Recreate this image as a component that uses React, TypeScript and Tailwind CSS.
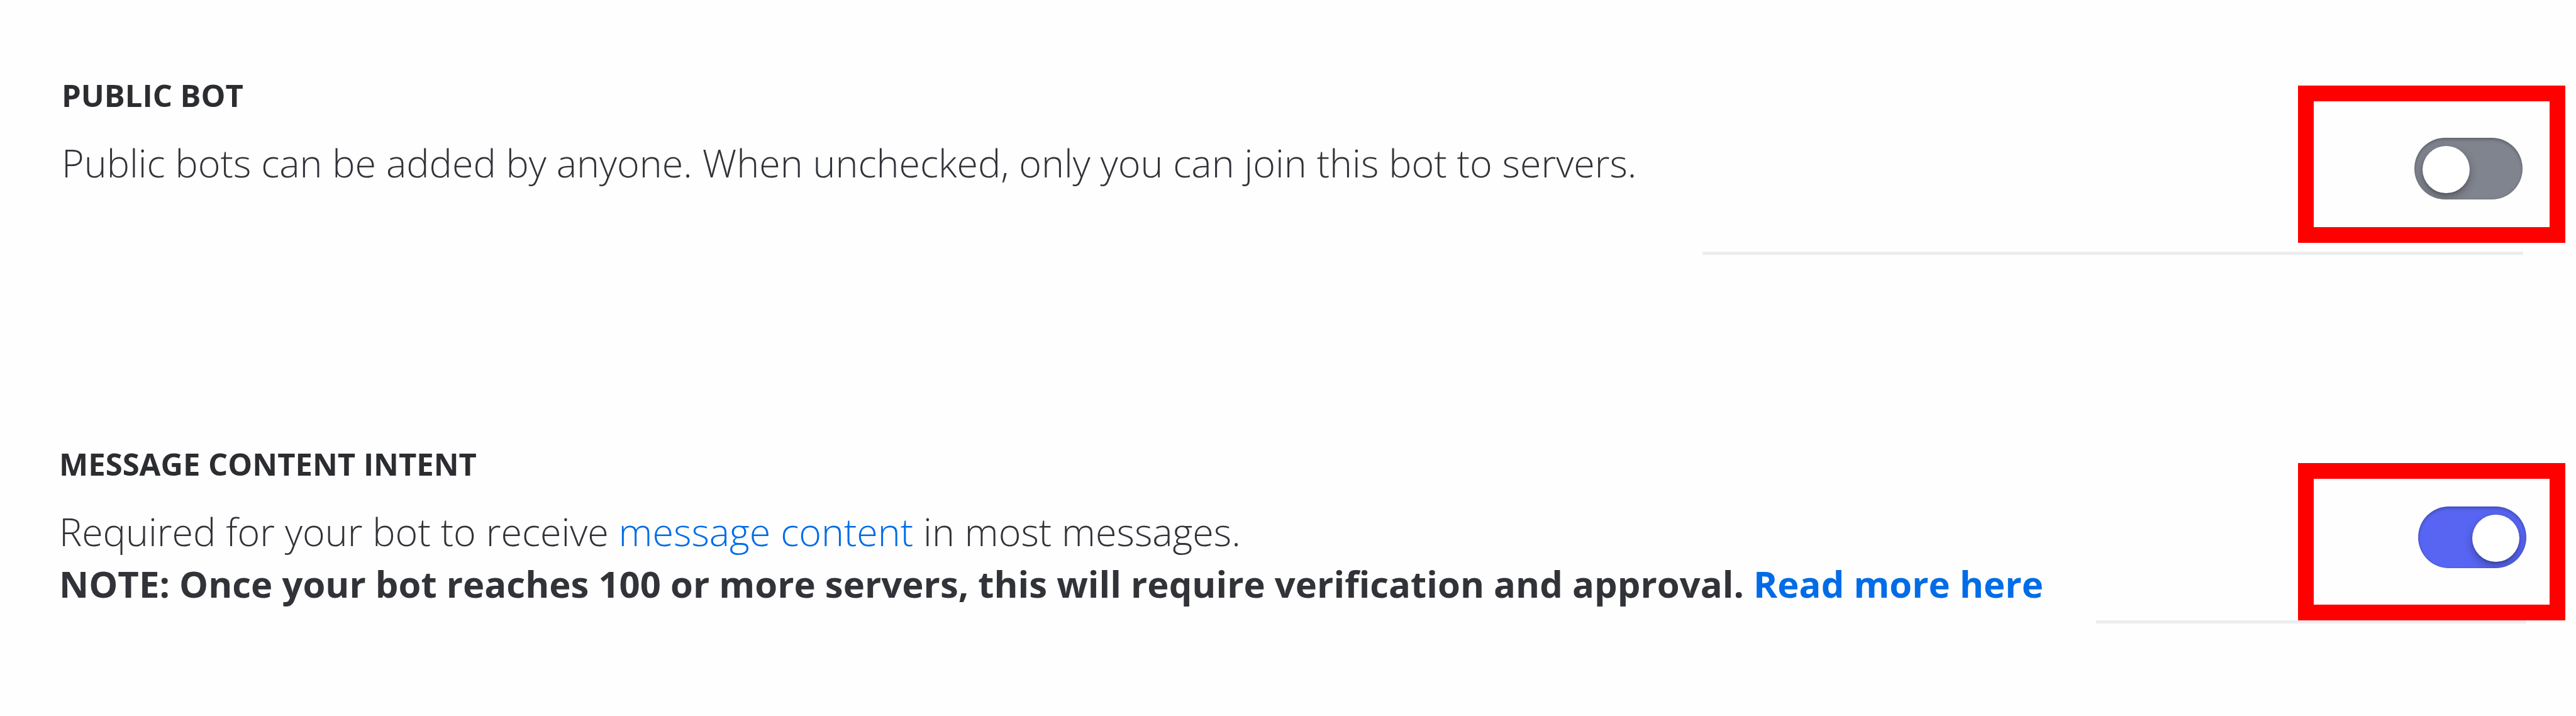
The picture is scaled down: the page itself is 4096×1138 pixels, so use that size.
import type { ReactNode } from "react";

type SettingProps = {
  id: string;
  title: string;
  className: string;
  sideClass: string;
  boxClass: string;
  lineClass: string;
  defaultChecked?: boolean;
  children: ReactNode;
};

function Switch({ id, defaultChecked }: { id: string; defaultChecked?: boolean }) {
  return (
    <input
      id={id}
      type="checkbox"
      role="switch"
      defaultChecked={defaultChecked}
      className="relative h-[98px] w-[172px] shrink-0 cursor-pointer appearance-none overflow-hidden rounded-full bg-[#80848e] shadow-[inset_0_3px_5px_rgba(0,0,0,0.22),inset_0_0_3px_rgba(0,0,0,0.12)] before:absolute before:top-[13px] before:left-[13px] before:size-[75px] before:rounded-full before:bg-white before:shadow-[0_6px_14px_rgba(0,0,0,0.3),0_2px_3px_rgba(0,0,0,0.15)] checked:bg-[#5865f2] checked:before:left-[86px]"
    />
  );
}

function Setting({ id, title, className, sideClass, boxClass, lineClass, defaultChecked, children }: SettingProps) {
  return (
    <section className={`flex ${className}`}>
      <div className="shrink-0">
        <h2 className="text-[49px] leading-[60px] font-bold text-[#2b2d31] uppercase">
          <label htmlFor={id}>{title}</label>
        </h2>
        <div className="mt-9 text-[61px] leading-[83px] font-light whitespace-nowrap text-[#313338]">{children}</div>
      </div>
      <div className={`flex min-w-0 flex-1 flex-col ${sideClass}`}>
        <div className={`mr-[17px] flex h-[250px] w-[425px] items-start justify-end self-end border-[25px] border-[#ff0000] ${boxClass}`}>
          <Switch id={id} defaultChecked={defaultChecked} />
        </div>
        <hr className={`h-[5px] border-0 bg-[#ebedef] ${lineClass}`} />
      </div>
    </section>
  );
}

export default function App() {
  return (
    <main className="min-h-screen bg-[#fefefe] pt-[121px] font-['Open_Sans',sans-serif]">
      <Setting
        id="public-bot"
        title="Public Bot"
        className="gap-[105px] pl-[98px]"
        sideClass="pt-[15px]"
        boxClass="pt-[58px] pr-[43px]"
        lineClass="mt-[14px] mr-[84px]"
      >
        <p>Public bots can be added by anyone. When unchecked, only you can join this bot to servers.</p>
      </Setting>
      <Setting
        id="message-content-intent"
        title="Message Content Intent"
        className="mt-[302px] gap-[84px] pl-[94px]"
        sideClass="pt-[29px]"
        boxClass="pt-[44px] pr-[37px]"
        lineClass="mr-[79px]"
        defaultChecked
      >
        <p>
          Required for your bot to receive{" "}
          <a href="#message-content" className="text-[#006ce7]">
            message content
          </a>{" "}
          in most messages.
        </p>
        <p className="text-[58px] font-bold">
          NOTE: Once your bot reaches 100 or more servers, this will require verification and approval.{" "}
          <a href="#read-more" className="text-[#006ce7]">
            Read more here
          </a>
        </p>
      </Setting>
    </main>
  );
}
